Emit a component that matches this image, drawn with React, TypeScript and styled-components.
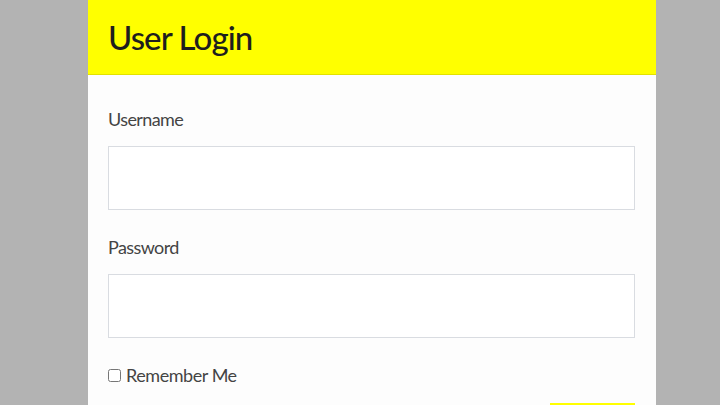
import styled, { createGlobalStyle } from "styled-components";

const GlobalStyle = createGlobalStyle`
  html, body {
    margin: 0;
    padding: 0;
    background: #b3b3b3;
    font-family: Lato, "Open Sans", "Liberation Sans", sans-serif;
    overflow: hidden;
  }
`;

// --- PAGE ---
const Page = styled.div`
  width: 720px;
  height: 405px;
  overflow: hidden;
  background: #b3b3b3;
`;

const Card = styled.div`
  margin-left: 88px;
  width: 568px;
  min-height: 405px;
  background: #fdfdfd;
`;

const Header = styled.div`
  height: 75px;
  background: #ffff00;
  border-bottom: 1px solid #e2e200;
  display: flex;
  align-items: center;
  padding-left: 20px;
  box-sizing: border-box;
`;

const Title = styled.h1`
  margin: 0;
  font-size: 33px;
  font-weight: 500;
  color: #1e1e1e;
  letter-spacing: -0.9px;
`;

const Body = styled.form`
  padding: 33px 21px 0 20px;
`;

const Label = styled.label`
  display: block;
  font-size: 18px;
  line-height: 22px;
  color: #444;
  letter-spacing: -0.6px;
  margin-bottom: 16px;
`;

const Input = styled.input`
  display: block;
  box-sizing: border-box;
  width: 100%;
  height: 64px;
  border: 1px solid #d9dce1;
  background: #fff;
  margin: 0 0 26px;
  outline: none;
`;

const Remember = styled.label`
  display: flex;
  align-items: center;
  gap: 5px;
  font-size: 18px;
  line-height: 22px;
  letter-spacing: -0.45px;
  color: #444;
`;

const Check = styled.input`
  margin: 0;
  width: 13px;
  height: 13px;
`;

const Actions = styled.div`
  display: flex;
  justify-content: flex-end;
  margin-top: 17px;
`;

const Button = styled.button`
  width: 85px;
  height: 36px;
  border: none;
  background: #ffff00;
  font-family: inherit;
  font-size: 16px;
  color: #222;
`;

export default function App() {
  return (
    <>
      <GlobalStyle />
      <Page>
        <Card>
          <Header>
            <Title>User Login</Title>
          </Header>
          <Body onSubmit={(e) => e.preventDefault()}>
            <Label htmlFor="username">Username</Label>
            <Input id="username" type="text" />
            <Label htmlFor="password">Password</Label>
            <Input id="password" type="password" />
            <Remember>
              <Check type="checkbox" />
              Remember Me
            </Remember>
            <Actions>
              <Button type="submit">Login</Button>
            </Actions>
          </Body>
        </Card>
      </Page>
    </>
  );
}
